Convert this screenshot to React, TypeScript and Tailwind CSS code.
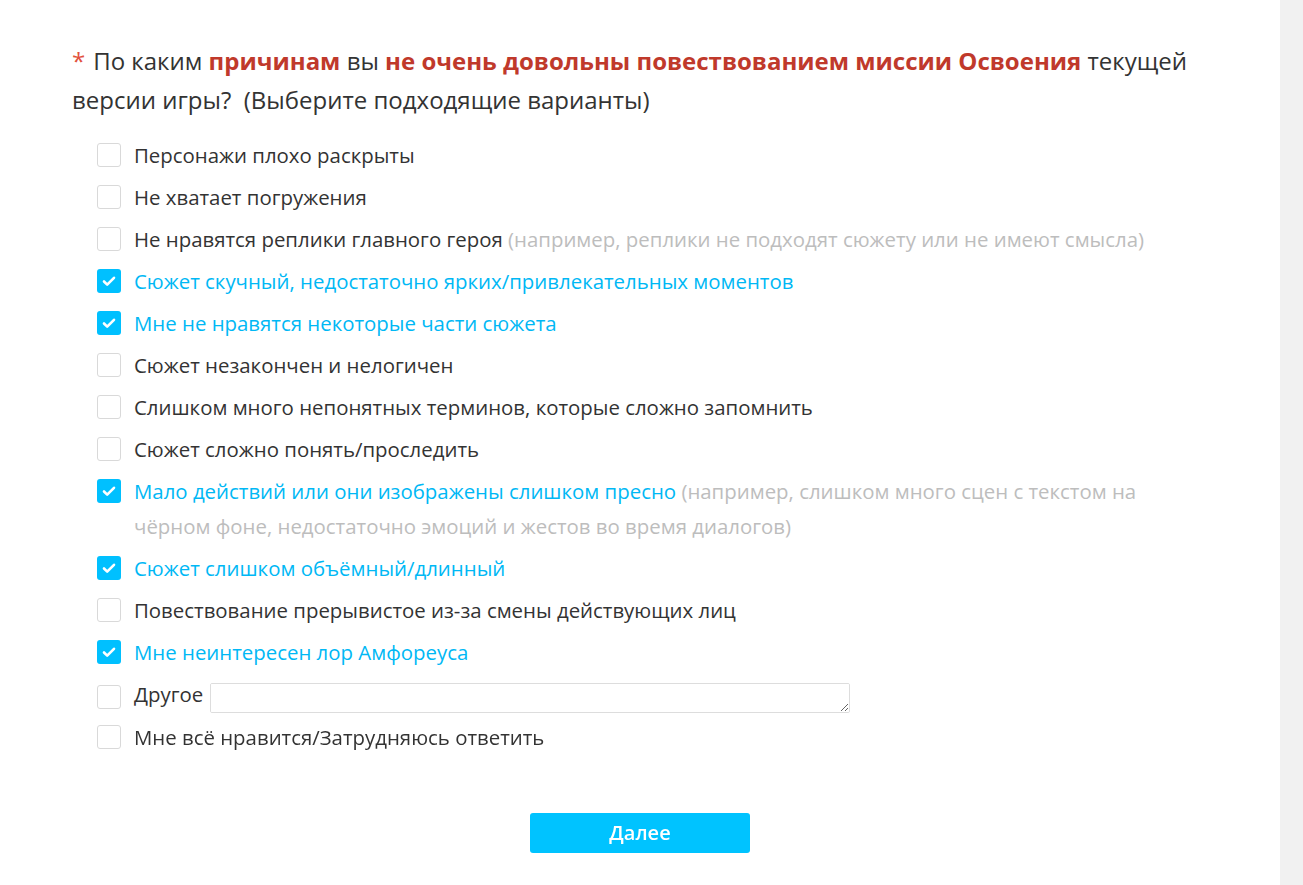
const options: { label: string; note?: string; checked?: boolean }[] = [
  { label: 'Персонажи плохо раскрыты' },
  { label: 'Не хватает погружения' },
  { label: 'Не нравятся реплики главного героя', note: '(например, реплики не подходят сюжету или не имеют смысла)' },
  { label: 'Сюжет скучный, недостаточно ярких/привлекательных моментов', checked: true },
  { label: 'Мне не нравятся некоторые части сюжета', checked: true },
  { label: 'Сюжет незакончен и нелогичен' },
  { label: 'Слишком много непонятных терминов, которые сложно запомнить' },
  { label: 'Сюжет сложно понять/проследить' },
  {
    label: 'Мало действий или они изображены слишком пресно',
    note: '(например, слишком много сцен с текстом на чёрном фоне, недостаточно эмоций и жестов во время диалогов)',
    checked: true,
  },
  { label: 'Сюжет слишком объёмный/длинный', checked: true },
  { label: 'Повествование прерывистое из-за смены действующих лиц' },
  { label: 'Мне неинтересен лор Амфореуса', checked: true },
];

function Box({ checked }: { checked?: boolean }) {
  if (checked) {
    return (
      <span className="mt-[5px] flex h-6 w-6 shrink-0 items-center justify-center rounded-[3px] bg-[#00c0ff]">
        <svg width="16" height="16" viewBox="0 0 16 16" fill="none">
          <path d="M3 8.5l3.2 3.2L13 4.8" stroke="white" strokeWidth="2.6" strokeLinecap="round" strokeLinejoin="round" />
        </svg>
      </span>
    );
  }
  return <span className="mt-[5px] h-6 w-6 shrink-0 rounded-[3px] border border-[#d9d9d9] bg-white" />;
}

export default function App() {
  return (
    <div className="flex min-h-[885px] bg-white" style={{ fontFamily: '"Open Sans", "Noto Sans", sans-serif' }}>
      <main className="flex-1 pl-[72px] pr-[80px] pt-[41px]">
        <h2 className="text-[24px] leading-[39px] text-[#333]">
          <span className="mr-[8px] text-[#e2513c]">*</span>
          По каким <b className="font-bold text-[#c0392b]">причинам</b> вы{' '}
          <b className="font-bold text-[#c0392b]">не очень довольны повествованием миссии Освоения</b> текущей версии
          игры?&nbsp; (Выберите подходящие варианты)
        </h2>

        <ul className="mt-[15px] pl-[25px]">
          {options.map((o) => (
            <li key={o.label} className="flex gap-[13px] py-[3.5px] text-[20.4px] leading-[35px]">
              <Box checked={o.checked} />
              <span className={o.checked ? 'text-[#00b8f5]' : 'text-[#333]'}>
                {o.label}
                {o.note && <span className="text-[#bdbdbd]"> {o.note}</span>}
              </span>
            </li>
          ))}
          <li className="flex items-center gap-[13px] py-[3.5px] text-[20.4px] leading-[35px]">
            <Box />
            <span className="text-[#333]">Другое</span>
            <textarea className="-ml-[6px] mt-[6px] h-[30px] w-[640px] rounded-[2px] border border-[#ddd] bg-white" />
          </li>
          <li className="flex gap-[13px] py-[3.5px] text-[20.4px] leading-[35px]">
            <Box />
            <span className="text-[#333]">Мне всё нравится/Затрудняюсь ответить</span>
          </li>
        </ul>

        <div className="mt-[55px] flex justify-center pl-[8px]">
          <button className="h-10 w-[220px] rounded-[3px] bg-[#00c3ff] text-[20px] font-semibold text-white">Далее</button>
        </div>
      </main>
      <aside className="w-[23px] shrink-0 bg-[#f1f1f1]" />
    </div>
  );
}
